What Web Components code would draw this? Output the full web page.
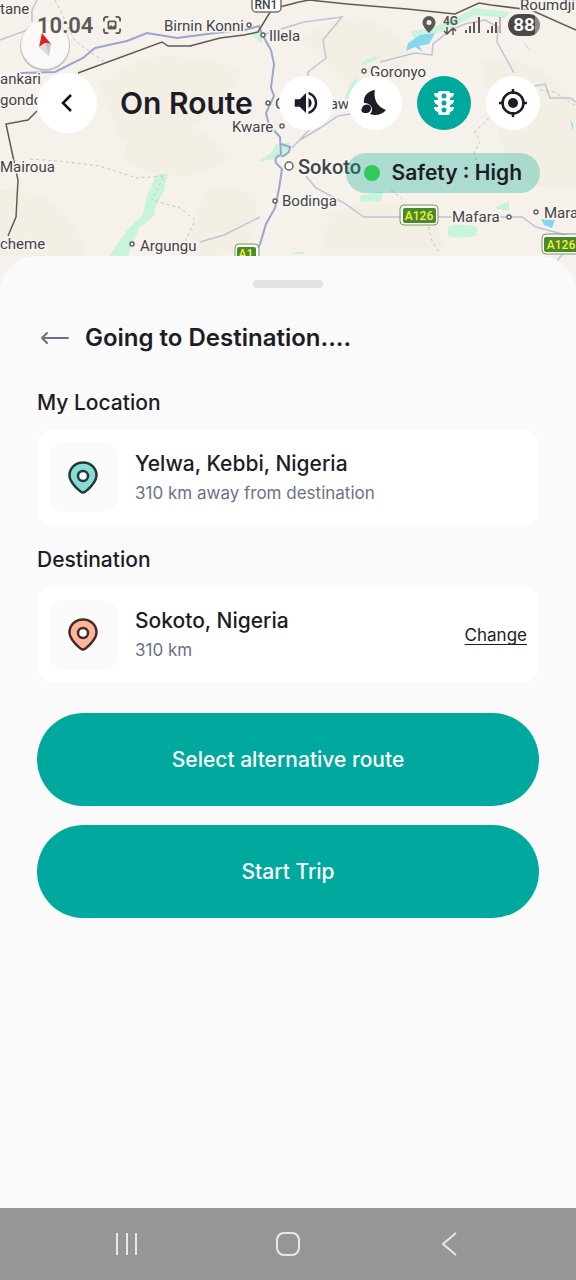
<!DOCTYPE html>
<html lang="en">
<head>
<meta charset="utf-8">
<meta name="viewport" content="width=device-width, initial-scale=1">
<title>On Route</title>
<style>
    :root {
        --teal: #00a99d;
        --ink: #1d1c27;
        --muted: #6b7286;
        --surface: #fafafa;
    }
    body {
        margin: 0;
        font-family: Inter, "Liberation Sans", sans-serif;
        color: var(--ink);
        background: var(--surface);
    }
</style>
</head>
<body>

<trip-screen>
    <map-view slot="map"></map-view>
    <status-bar slot="top"></status-bar>
    <route-toolbar slot="top" heading="On Route">
        <icon-button label="Sound">
            <svg width="30" height="30" viewBox="0 0 24 24" fill="currentColor"><path d="M3 9v6h4l5 5V4L7 9H3zm13.500 3A4.500 4.500 0 0 0 14 7.970v8.050c1.480-.73 2.500-2.250 2.500-4.020zM14 3.230v2.060c2.890.86 5 3.540 5 6.710s-2.110 5.850-5 6.710v2.060c4.010-.91 7-4.490 7-8.770s-2.990-7.860-7-8.770z"/></svg>
        </icon-button>
        <icon-button label="Night mode">
            <svg width="28" height="26" viewBox="0 0 28 26" fill="currentColor"><path d="M14 0c-2 8 2 17 11 20-4 5-11 6-16 4 4-4 2-11-6-11C2 6 7 1 14 0z"/><path d="M1 18c2-5 9-4 9 0 0 3-2 5-5 5H3c-3-1-3-3-2-5z"/></svg>
        </icon-button>
        <icon-button label="Traffic" active>
            <svg width="22" height="26" viewBox="0 0 22 26"><path fill="#fff" d="M5 3q0-2 2-2h8q2 0 2 2h4q0 4-4 5v2h4q0 4-4 5v2h4q0 4-4 5v1q0 2-2 2H7q-2 0-2-2v-1q-4-1-4-5h4v-2q-4-1-4-5h4V8Q1 7 1 3z"/><g fill="#00a99d"><circle cx="11" cy="6" r="2.500"/><circle cx="11" cy="13" r="2.500"/><circle cx="11" cy="20" r="2.500"/></g></svg>
        </icon-button>
        <icon-button label="My position">
            <svg width="28" height="28" viewBox="0 0 28 28" fill="none" stroke="currentColor" stroke-width="2.500"><circle cx="14" cy="14" r="10.500"/><path d="M14 0v5M14 23v5M0 14h5M23 14h5"/><circle cx="14" cy="14" r="5" fill="currentColor" stroke="none"/></svg>
        </icon-button>
    </route-toolbar>
    <safety-badge slot="top">Safety : High</safety-badge>

    <trip-sheet heading="Going to Destination....">
        <place-section heading="My Location" pin="#88dcd2" edge="#1f3a3d">
            Yelwa, Kebbi, Nigeria
            <span slot="detail">310 km away from destination</span>
        </place-section>
        <place-section heading="Destination" pin="#ffb599" edge="#472a28">
            Sokoto, Nigeria
            <span slot="detail">310 km</span>
            <a slot="action" href="#change">Change</a>
        </place-section>
        <pill-button slot="actions">Select alternative route</pill-button>
        <pill-button slot="actions">Start Trip</pill-button>
    </trip-sheet>

    <nav-bar slot="bottom"></nav-bar>
</trip-screen>

<script>
// Attach an open shadow root holding the given markup
function render(host, html) {
    const template = document.createElement('template');
    template.innerHTML = html;
    host.attachShadow({ mode: 'open' });
    host.shadowRoot.appendChild(template.content.cloneNode(true));
}


// ╔══════════════════════════════════════════════════════════╗
// ║                       Screen layout                      ║
// ╚══════════════════════════════════════════════════════════╝
class TripScreen extends HTMLElement {
    constructor() {
        super();
        render(this, `
            <style>
                :host {
                    display: flex;
                    flex-direction: column;
                    min-height: 100vh;
                    position: relative;
                    overflow: hidden;
                }
                header {
                    position: relative;
                    display: flex;
                    flex-direction: column;
                    padding: 0 36px 63px 37px;
                }
                main {
                    position: relative;
                    flex: 1;
                    display: flex;
                    flex-direction: column;
                }
            </style>
            <slot name="map"></slot>
            <header><slot name="top"></slot></header>
            <main><slot></slot></main>
            <slot name="bottom"></slot>
        `);
    }
}
customElements.define('trip-screen', TripScreen);


// ╔══════════════════════════════════════════════════════════╗
// ║                            Map                           ║
// ╚══════════════════════════════════════════════════════════╝
class MapView extends HTMLElement {
    constructor() {
        super();
        render(this, `
            <style>
                :host {
                    /* the map lies behind the header and the sheet's corners */
                    position: absolute;
                    inset: 0 0 auto 0;
                    height: 300px;
                    background: #f6f2eb;
                }
                svg { display: block; width: 100%; height: 100%; }
                text {
                    font-family: Roboto, "Liberation Sans", sans-serif;
                    font-size: 15px;
                    fill: #40444c;
                    stroke: #f8f5ef;
                    stroke-width: 3px;
                    paint-order: stroke;
                }
                .city { font-size: 20px; font-weight: 500; }
                .shield { font-size: 12px; font-weight: 500; fill: #f4ee3c; stroke: none; text-anchor: middle; }
                .rn { fill: #40444c; }
                .land { fill: #f1ecdf; opacity: .5; }
                .green { fill: #c8f3dc; }
                .water { fill: #86d7ee; }
                .road { fill: none; stroke: #5f5c58; stroke-width: 1.500; }
                .main { fill: none; stroke: #9aa6cb; stroke-width: 2; }
                .minor { fill: none; stroke: #bfc4d6; stroke-width: 1.500; }
                .border { fill: none; stroke: #c9c4bd; stroke-dasharray: 3 3; }
                .town { fill: #fff; stroke: #5f6368; stroke-width: 1.500; }
            </style>
            <svg viewBox="0 0 576 300" preserveAspectRatio="xMinYMin slice" aria-label="Map around Sokoto">
                <g class="land">
                    <path d="M100 85q50-40 90-25 50 0 50 20-20 40-50 45-40 30-70 15zM125 130q40-15 65-5 40 20 35 35-25 20-55 15-40-5-45-20zM300 40q40-30 70-20 40 20 40 40-30 40-60 30zM205 190q30-5 50 5 5 40-10 50-30 20-60 5zM330 215q40-20 80-10 40 20 30 50H320zM480 60q50-10 96 40v90q-60 0-70-30zM0 190q40 0 60 20 30 30 20 46H0z"/>
                </g>
                <g class="green">
                    <path d="M157 174h11l-5 19-7 12-2 11-15 12-11 28h-19l19-27 15-14 4-20z"/>
                    <path d="M250 33l13-2-1 13zM276 144l14-2-3 14-29 6 14-10zM361 63q9-7 20-7l-7 5-12 5zM358 76l-5 22-9 2 7-17zM411 32l38-10 25-14 35 4-4 6-30-3-30 16-31 7zM448 227q12-5 29 0v8q-15 5-29 1zM494 208l15-7v10zM360 196l23-5-2 10-20 1zM292 254q8-5 13 0z"/>
                </g>
                <g class="water">
                    <path d="M408 43l12-8 15-2-6 11-10 2 4 6-8-5-9 4zM522 40l6 7 2 4zM541 219l14 1-3 8-8-3zM570 119l3 6v6z"/>
                </g>

                <path class="border" d="M55 0l20 41 31 22M30 159l29 2 40 5 38 12 27-2 -12 24M155 201l25 7 15 12-10 22M475 130l5 12-6 10 5 14M391 190l15 12M427 221l5 20 8 13M540 90l14 2 22 14M474 133l14-14 20-10"/>

                <path class="minor" d="M0 40l30-11M37 0l-5 10v12M262 35l42-13 38-5-19 23 3 18-18 14v14M300 140l20-12 18-12 12-2 30-25M292 148l17-18M306 176l10 12 28 15 20 14h60M200 242l24-7 36-18M404 217h118l14 10 30 8M380 62l35-9 17 2 1-11 18-14 14-6 20-4 13 7-1 15 17 31M535 86l10-2 5 14h20l6 4M566 250l-10 12"/>
                <path class="main" d="M20 73l35-1 28-14 12-10 32-7 20-8 30 5 38-5 30-3 14-4 3 8 9 16 3 14-3 24 3 8-8 17 3 12 11 12 1 18q-7 1-5 8l6 6-3 20-4 19-9 16-6 20-9 16"/>
                <path class="main" d="M281 144l9 3-1 5-7 5"/>
                <path class="road" d="M190 46l30-8 24-3 14-3 14-23 27-7 10-2 38 4 60 5 48 5 24-11 12 2 40 5 45 20M78 73l84-31 6 4 24 0M37 111l-9 9-22 4 12 56-2 37-8 19"/>

                <g>
                    <circle class="town" cx="249" cy="25" r="2"/>
                    <circle class="town" cx="263" cy="35" r="2"/>
                    <circle class="town" cx="268" cy="103" r="2"/>
                    <circle class="town" cx="282" cy="126" r="2"/>
                    <circle class="town" cx="364" cy="71" r="2"/>
                    <circle class="town" cx="289" cy="166" r="4"/>
                    <circle class="town" cx="275" cy="201" r="2"/>
                    <circle class="town" cx="132" cy="244" r="2"/>
                    <circle class="town" cx="509" cy="217" r="2"/>
                    <circle class="town" cx="536" cy="212" r="2"/>
                </g>

                <text x="0" y="14">tane</text>
                <text x="0" y="84">ankari</text>
                <text x="0" y="105">gondo</text>
                <text x="0" y="172">Mairoua</text>
                <text x="0" y="249">cheme</text>
                <text x="140" y="251">Argungu</text>
                <text x="164" y="31">Birnin Konni</text>
                <text x="269" y="41">Illela</text>
                <text x="275" y="109">Gwadabawa</text>
                <text x="232" y="132">Kware</text>
                <text x="370" y="77">Goronyo</text>
                <text x="520" y="10">Roumdji</text>
                <text class="city" x="298" y="174">Sokoto</text>
                <text x="282" y="206">Bodinga</text>
                <text x="452" y="222">Mafara</text>
                <text x="544" y="218">Mara</text>

                <rect x="252" y="-8" width="29" height="20" rx="4" fill="#fff" stroke="#77746f" stroke-width="1.500"/>
                <text class="shield rn" x="266" y="9">RN1</text>
                <g fill="#4a8a2c" stroke="#fff" stroke-width="2">
                    <rect x="402" y="207" width="35" height="17" rx="3"/>
                    <rect x="543" y="236" width="36" height="17" rx="3"/>
                    <rect x="236" y="246" width="21" height="17" rx="3"/>
                </g>
                <g fill="none" stroke="#6f9c5e">
                    <rect x="400" y="205" width="38" height="20" rx="4"/>
                    <rect x="542" y="234" width="39" height="20" rx="4"/>
                    <rect x="235" y="244" width="24" height="20" rx="4"/>
                </g>
                <text class="shield" x="419" y="220">A126</text>
                <text class="shield" x="561" y="249">A126</text>
                <text class="shield" x="246" y="258">A1</text>

                <!-- compass -->
                <circle cx="45" cy="46" r="25" fill="#000" opacity=".2"/>
                <circle cx="45" cy="45" r="24" fill="#faf9f8"/>
                <path fill="#e3201b" d="M42 33l9 11-6-1-6 4z"/>
                <path fill="#c9c7c5" d="M39 47l6-4 6 1-2 12z"/>
                <path fill="#dedcda" d="M39 47l6-4 4 13z"/>
            </svg>
        `);
    }
}
customElements.define('map-view', MapView);


// ╔══════════════════════════════════════════════════════════╗
// ║                        Status bar                        ║
// ╚══════════════════════════════════════════════════════════╝
class StatusBar extends HTMLElement {
    constructor() {
        super();
        render(this, `
            <style>
                :host {
                    display: flex;
                    align-items: center;
                    gap: 10px;
                    height: 50px;
                    color: #5b5856;
                    font-family: Roboto, "Liberation Sans", sans-serif;
                }
                time { font-size: 22px; font-weight: 600; }
                .right { display: flex; align-items: center; gap: 7px; margin-left: auto; }
                .net { display: grid; justify-items: center; font-size: 12px; font-weight: 700; line-height: 11px; }
                .battery {
                    width: 32px;
                    border-radius: 12px;
                    background: linear-gradient(90deg, #4a4745 85%, #8d8a88 85%);
                    color: #fff;
                    font-size: 19px;
                    font-weight: 600;
                    line-height: 22px;
                    text-align: center;
                }
                svg { display: block; fill: currentColor; }
            </style>
            <time>10:04</time>
            <svg width="18" height="18" viewBox="0 0 20 20"><path fill="none" stroke="currentColor" stroke-width="2" d="M1 6V4q0-3 3-3h2M14 1h2q3 0 3 3v2M19 14v2q0 3-3 3h-2M6 19H4q-3 0-3-3v-2"/><path fill-rule="evenodd" d="M7 5h6q2 0 2 2v6q0 2-2 2H7q-2 0-2-2V7q0-2 2-2zm0 2v5l2-2 2 2 2-2V7z"/></svg>
            <span class="right">
                <svg width="14" height="18" viewBox="0 0 14 18"><path fill-rule="evenodd" d="M7 0a6.500 6.500 0 0 1 6.500 6.500C13.500 11 7 17 7 17S.5 11 .5 6.500A6.500 6.500 0 0 1 7 0zm0 4a2.500 2.500 0 1 0 0 5 2.500 2.500 0 0 0 0-5z"/></svg>
                <span class="net">
                    <span>4G</span>
                    <svg width="14" height="8" viewBox="0 0 14 8"><path fill="none" stroke="currentColor" stroke-width="1.500" d="M4 0v7M1 4l3 3 3-3M10 8V1M7 4l3-3 3 3"/></svg>
                </span>
                <svg width="15" height="16" viewBox="0 0 15 16"><path d="M0 13h2v3H0zM4 9h2v7H4zM8 5h2v11H8zM13 0h2v16h-2z"/></svg>
                <svg width="14" height="16" viewBox="0 0 14 16"><path d="M0 13h2v3H0zM4 9h2v7H4zM8 5h2v11H8z"/><path opacity=".4" d="M12 0h2v16h-2z"/></svg>
                <span class="battery">88</span>
            </span>
        `);
    }
}
customElements.define('status-bar', StatusBar);


// ╔══════════════════════════════════════════════════════════╗
// ║                   Toolbar over the map                   ║
// ╚══════════════════════════════════════════════════════════╝
class IconButton extends HTMLElement {
    constructor() {
        super();
        render(this, `
            <style>
                :host { display: block; --size: 54px; }
                button {
                    display: grid;
                    place-items: center;
                    width: var(--size);
                    height: var(--size);
                    padding: 0;
                    border: 0;
                    border-radius: 50%;
                    background: #fff;
                    color: var(--ink);
                }
                :host([active]) button { background: var(--teal); }
                :host([large]) { --size: 60px; }
            </style>
            <button type="button"><slot></slot></button>
        `);
        this.shadowRoot.querySelector('button').setAttribute('aria-label', this.getAttribute('label'));
    }
}
customElements.define('icon-button', IconButton);

class RouteToolbar extends HTMLElement {
    constructor() {
        super();
        render(this, `
            <style>
                :host { display: flex; align-items: center; padding: 23px 0 20px; }
                h1 { flex: 1; margin: 0 0 0 23px; font-size: 30px; font-weight: 600; line-height: 36px; white-space: nowrap; }
                .tools { display: flex; gap: 15px; }
            </style>
            <icon-button large label="Back">
                <svg width="24" height="24" viewBox="0 0 24 24" fill="none" stroke="#111" stroke-width="2.500"><path d="M16 4l-8 8 8 8"/></svg>
            </icon-button>
            <h1></h1>
            <div class="tools"><slot></slot></div>
        `);
        this.shadowRoot.querySelector('h1').textContent = this.getAttribute('heading');
    }
}
customElements.define('route-toolbar', RouteToolbar);

class SafetyBadge extends HTMLElement {
    constructor() {
        super();
        render(this, `
            <style>
                :host {
                    align-self: flex-end;
                    display: flex;
                    align-items: center;
                    gap: 12px;
                    padding: 0 18px;
                    border-radius: 20px;
                    background: rgba(0, 169, 145, .3);
                    font-size: 21px;
                    font-weight: 600;
                    line-height: 40px;
                }
                i { width: 16px; height: 16px; border-radius: 50%; background: #34c759; }
            </style>
            <i></i><span><slot></slot></span>
        `);
    }
}
customElements.define('safety-badge', SafetyBadge);


// ╔══════════════════════════════════════════════════════════╗
// ║                       Bottom sheet                       ║
// ╚══════════════════════════════════════════════════════════╝
class TripSheet extends HTMLElement {
    constructor() {
        super();
        render(this, `
            <style>
                :host {
                    flex: 1;
                    display: flex;
                    flex-direction: column;
                    padding: 24px 37px;
                    border-radius: 36px 36px 0 0;
                    background: var(--surface);
                }
                .handle { align-self: center; width: 70px; height: 8px; border-radius: 4px; background: #e2e2e2; }
                .title { display: flex; align-items: center; gap: 16px; margin: 34px 0; }
                .title button { display: block; padding: 0 0 0 4px; border: 0; background: none; color: var(--muted); }
                svg { display: block; }
                h2 { margin: 0; font-size: 24px; font-weight: 600; line-height: 32px; white-space: nowrap; }
                .places { display: grid; gap: 20px; }
                .actions { display: grid; gap: 19px; margin-top: 31px; }
            </style>
            <div class="handle"></div>
            <div class="title">
                <button type="button" aria-label="Back">
                    <svg width="28" height="14" viewBox="0 0 28 14" fill="none" stroke="currentColor" stroke-width="2" stroke-linecap="round" stroke-linejoin="round"><path d="M27 7H1M6 2L1 7l5 5"/></svg>
                </button>
                <h2></h2>
            </div>
            <div class="places"><slot></slot></div>
            <div class="actions"><slot name="actions"></slot></div>
        `);
        this.shadowRoot.querySelector('h2').textContent = this.getAttribute('heading');
    }
}
customElements.define('trip-sheet', TripSheet);

class PlaceSection extends HTMLElement {
    constructor() {
        super();
        render(this, `
            <style>
                :host { display: block; }
                h3 { margin: 0 0 12px; font-size: 21px; font-weight: 500; line-height: 30px; }
                .card {
                    display: flex;
                    align-items: center;
                    gap: 18px;
                    padding: 13px 12px;
                    border-radius: 16px;
                    background: #fff;
                }
                .pin { display: grid; place-items: center; width: 68px; height: 69px; border-radius: 14px; background: var(--surface); }
                .text { flex: 1; font-size: 21px; font-weight: 500; line-height: 30px; }
                .detail { color: var(--muted); font-size: 17px; font-weight: 400; line-height: 28px; }
                ::slotted(a) { color: var(--ink); font-size: 17px; text-underline-offset: 3px; text-decoration-skip-ink: none; }
            </style>
            <h3></h3>
            <div class="card">
                <div class="pin">
                    <svg width="30" height="33" viewBox="0 0 30 33" stroke-width="2.500" stroke-linejoin="round"><path class="drop" d="M15 31.500C13 31.500 1.500 22 1.500 14.500 1.500 7 7.500 1.500 15 1.500S28.500 7 28.500 14.500C28.500 22 17 31.500 15 31.500z"/><circle class="hole" cx="15" cy="15" r="5" fill="#fff"/></svg>
                </div>
                <div class="text">
                    <slot></slot>
                    <div class="detail"><slot name="detail"></slot></div>
                </div>
                <slot name="action"></slot>
            </div>
        `);
        this.shadowRoot.querySelector('h3').textContent = this.getAttribute('heading');
        this.shadowRoot.querySelector('.drop').setAttribute('fill', this.getAttribute('pin'));
        this.shadowRoot.querySelector('svg').setAttribute('stroke', this.getAttribute('edge'));
    }
}
customElements.define('place-section', PlaceSection);

class PillButton extends HTMLElement {
    constructor() {
        super();
        render(this, `
            <style>
                :host { display: block; }
                button {
                    width: 100%;
                    padding: 0;
                    border: 0;
                    border-radius: 47px;
                    background: var(--teal);
                    color: #fff;
                    font: 500 21px/93px Inter, "Liberation Sans", sans-serif;
                }
            </style>
            <button type="button"><slot></slot></button>
        `);
    }
}
customElements.define('pill-button', PillButton);


// ╔══════════════════════════════════════════════════════════╗
// ║                     System navigation                    ║
// ╚══════════════════════════════════════════════════════════╝
class NavBar extends HTMLElement {
    constructor() {
        super();
        render(this, `
            <style>
                :host { display: block; background: #969696; }
                nav { display: grid; grid-template-columns: repeat(3, 1fr); padding: 0 47px; }
                button { display: grid; place-items: center; height: 72px; padding: 0; border: 0; background: none; color: #e8e8e8; }
                svg { display: block; fill: none; stroke: currentColor; stroke-width: 2; }
            </style>
            <nav>
                <button type="button" aria-label="Recent apps"><svg width="24" height="24" viewBox="0 0 24 24"><path d="M2 1v22M12 1v22M21 1v22"/></svg></button>
                <button type="button" aria-label="Home"><svg width="26" height="26" viewBox="0 0 26 26"><rect x="2" y="2" width="22" height="22" rx="7"/></svg></button>
                <button type="button" aria-label="Back"><svg width="24" height="26" viewBox="0 0 24 26"><path d="M19 2L6 13l13 11"/></svg></button>
            </nav>
        `);
    }
}
customElements.define('nav-bar', NavBar);
</script>
</body>
</html>
